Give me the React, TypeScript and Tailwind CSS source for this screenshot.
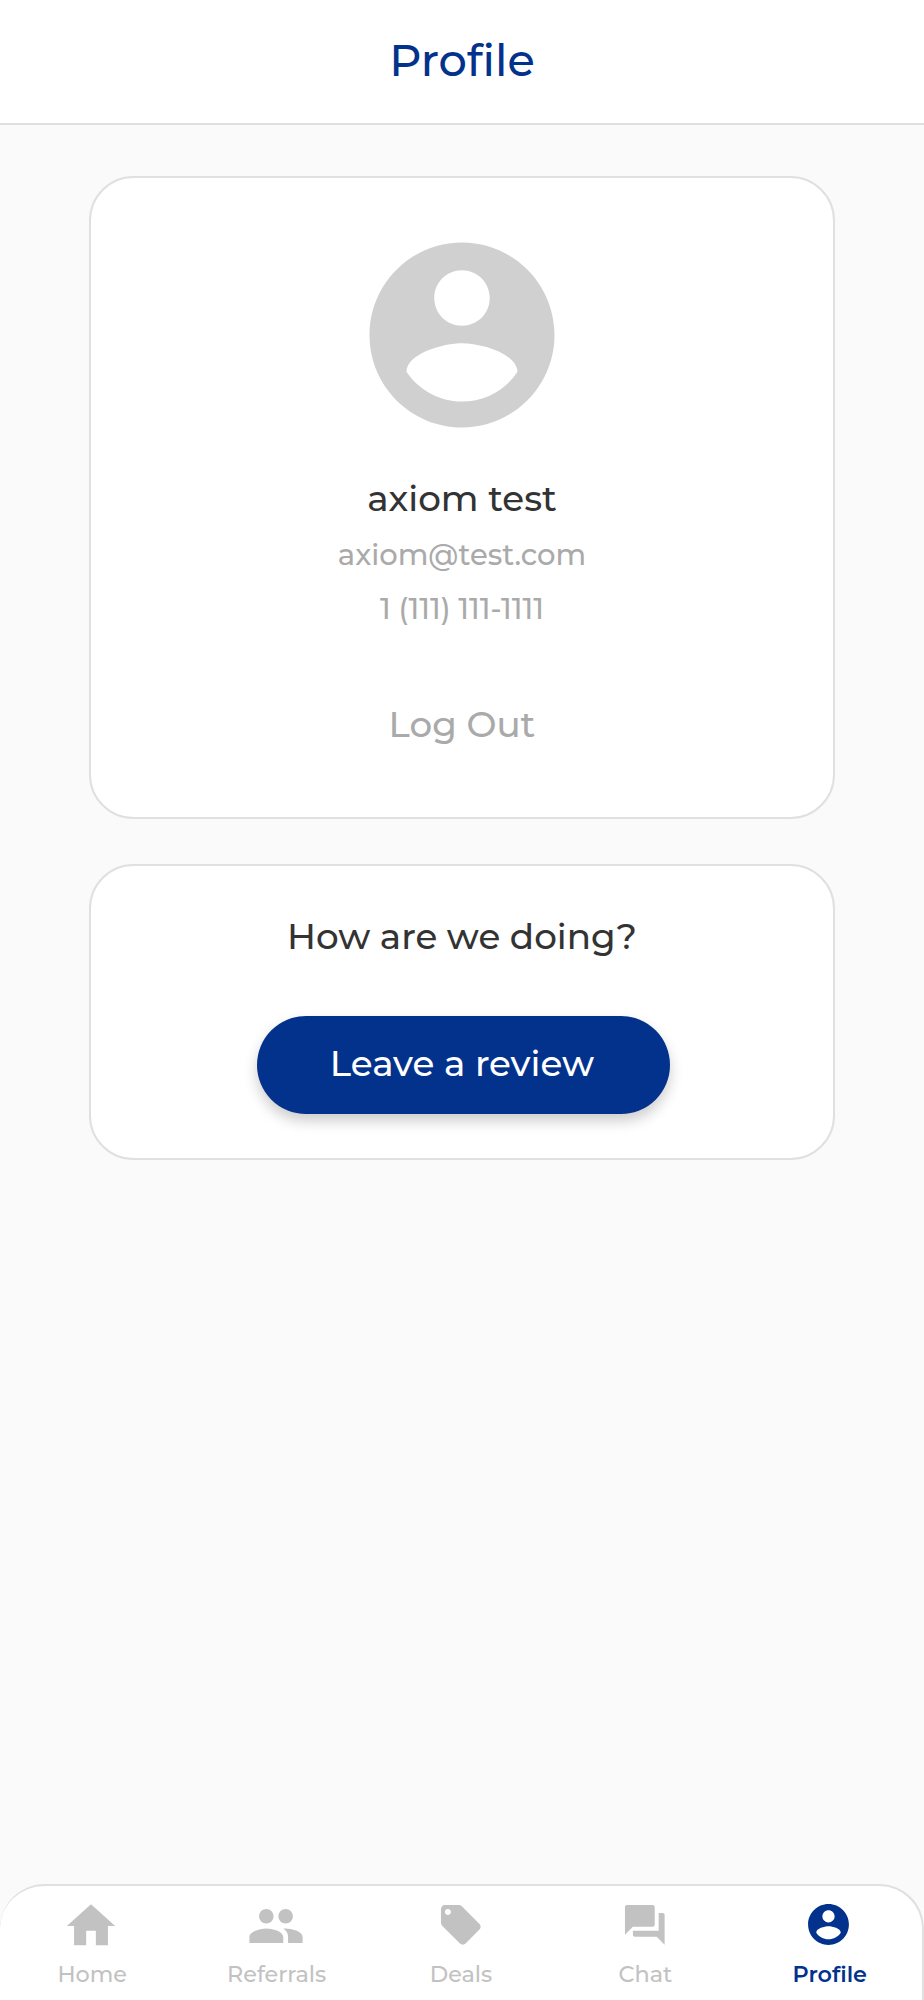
import React from "react"
import { MdForum, MdHome, MdLocalOffer, MdPeople } from "react-icons/md"


const AccountCircle : React.FC<{ className?: string }> = ({ className }) => {
    return (
        <svg xmlns="http://www.w3.org/2000/svg" viewBox="0 0 24 24" fill="currentColor" className={className}>
            <path d="M12 2C6.48 2 2 6.48 2 12s4.48 10 10 10 10-4.48 10-10S17.52 2 12 2zm0 3c1.66 0 3 1.34 3 3s-1.34 3-3 3-3-1.34-3-3 1.34-3 3-3zm0 14.2c-2.5 0-4.71-1.28-6-3.22.03-1.99 4-3.08 6-3.08 1.99 0 5.97 1.09 6 3.08-1.29 1.94-3.5 3.22-6 3.22z" />
        </svg>
    )
}

const App : React.FC = () => {
    return (
        <div className="flex h-[2000px] w-[924px] flex-col bg-[#fafafa] font-['Montserrat',sans-serif] font-medium">
            {/* Header */}
            <header className="flex h-[125px] shrink-0 items-center justify-center border-b-2 border-[#e0e0e0] bg-white pb-[3px]">
                <h1 className="text-[44.64px] leading-[54px] text-[#03328c]">Profile</h1>
            </header>

            <main className="flex flex-1 flex-col items-center gap-[45px] pt-[51px]">
                {/* User card */}
                <section className="flex h-[643px] w-[745.4px] flex-col items-center rounded-[44.6px] border-2 border-[#e0e0e0] bg-white pt-[46px]">
                    <AccountCircle className="ml-[1px] size-[222px] shrink-0 text-[#d0d0d0]" />
                    <h2 className="mt-[30px] text-[35.7px] leading-[44px] text-[#333333]">axiom test</h2>
                    <p className="mt-[17px] text-[29px] leading-[36px] text-[#aaaaaa]">axiom@test.com</p>
                    <p className="mt-[18px] text-[29px] leading-[36px] text-[#aaaaaa]">1 (111) 111-1111</p>
                    <button className="mt-[75px] text-[35.7px] leading-[44px] text-[#aaaaaa]">Log Out</button>
                </section>

                {/* Review card */}
                <section className="flex h-[296.4px] w-[745.4px] flex-col items-center rounded-[44.6px] border-2 border-[#e0e0e0] bg-white pt-[48px]">
                    <h2 className="text-[35.7px] leading-[44px] text-[#333333]">How are we doing?</h2>
                    <button className="ml-[2.5px] mt-[57.6px] flex h-[98px] w-[413px] items-center justify-center rounded-full bg-[#03328c] pb-[3px] pr-[2.5px] text-[35.7px] leading-[44px] text-white shadow-[0_7px_14px_rgba(0,0,0,0.2)]">
                        Leave a review
                    </button>
                </section>
            </main>

            {/* Bottom tabs */}
            <nav className="grid h-[116px] shrink-0 grid-cols-5 rounded-t-[44.6px] border-r-2 border-t-2 border-[#e0e0e0] bg-white pt-[11px] text-[22.32px] leading-[27px] text-[#c2c2c2]">
                <a className="flex flex-col items-center gap-[6px]">
                    <span className="flex h-[58px] items-center pr-[2px]"><MdHome className="size-[58px]" /></span>
                    Home
                </a>
                <a className="flex flex-col items-center gap-[6px]">
                    <span className="flex h-[58px] items-center pr-[2px]"><MdPeople className="size-[58px]" /></span>
                    Referrals
                </a>
                <a className="flex flex-col items-center gap-[6px]">
                    <span className="flex h-[58px] items-center pb-[2px]"><MdLocalOffer className="size-[47.6px]" /></span>
                    Deals
                </a>
                <a className="flex flex-col items-center gap-[6px]">
                    <span className="flex h-[58px] items-center pb-[2px] pr-[1px]"><MdForum className="size-[47.6px]" /></span>
                    Chat
                </a>
                <a className="flex flex-col items-center gap-[6px] font-semibold text-[#03328c]">
                    <span className="flex h-[58px] items-center pb-[4px] pr-[2px]"><AccountCircle className="size-[49px]" /></span>
                    Profile
                </a>
            </nav>
        </div>
    )
}

export default App
